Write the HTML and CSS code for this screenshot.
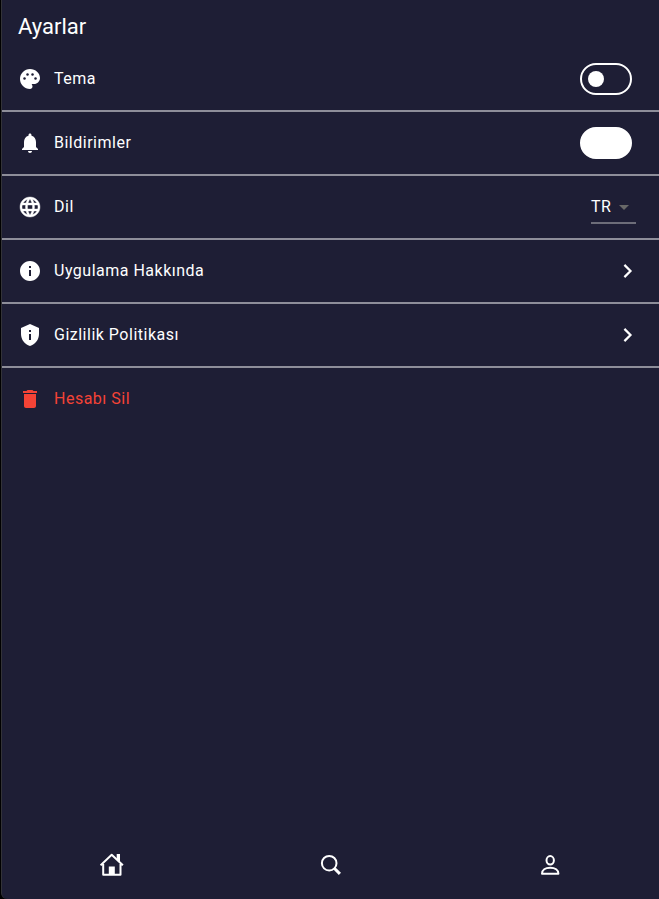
FILE: index.html
```html
<!DOCTYPE html>
<html lang="tr">
<head>
<meta charset="utf-8">
<title>Ayarlar</title>
<link rel="stylesheet" href="styles.css">
</head>
<body>
<div class="app">
  <h1 class="title">Ayarlar</h1>
  <main class="settings">
    <div class="row">
      <svg class="icon" viewBox="0 0 24 24"><path d="M12 2C6.490 2 2 6.490 2 12s4.490 10 10 10c1.380 0 2.500-1.120 2.500-2.500 0-.61-.23-1.200-.64-1.670-.08-.1-.13-.21-.13-.33 0-.28.22-.5.5-.5H16c3.310 0 6-2.690 6-6 0-4.960-4.490-9-10-9z"/><g class="hole"><circle cx="6.500" cy="11.500" r="1.250"/><circle cx="9.500" cy="7.500" r="1.250"/><circle cx="14.500" cy="7.500" r="1.250"/><circle cx="17.500" cy="11.500" r="1.250"/></g></svg>
      <span class="label">Tema</span>
      <span class="switch"><span class="thumb"></span></span>
    </div>
    <div class="row">
      <svg class="icon" viewBox="0 0 24 24"><path d="M12 22c1.100 0 2-.9 2-2h-4c0 1.100.9 2 2 2zm6-6v-5c0-3.070-1.630-5.640-4.500-6.320V4c0-.83-.67-1.500-1.500-1.500s-1.500.67-1.500 1.500v.68C7.640 5.360 6 7.920 6 11v5l-2 2v1h16v-1l-2-2z"/></svg>
      <span class="label">Bildirimler</span>
      <span class="switch on"></span>
    </div>
    <div class="row">
      <svg class="icon globe" viewBox="0 0 24 24"><path d="M11.990 2C6.470 2 2 6.480 2 12s4.470 10 9.990 10C17.520 22 22 17.520 22 12S17.520 2 11.990 2zm6.930 6h-2.950c-.32-1.250-.78-2.450-1.380-3.560 1.840.63 3.370 1.910 4.330 3.560zM12 4.040c.83 1.200 1.480 2.530 1.910 3.960h-3.820c.43-1.430 1.080-2.760 1.910-3.960zM4.260 14C4.100 13.360 4 12.690 4 12s.1-1.360.26-2h3.380c-.08.66-.14 1.320-.14 2s.06 1.340.14 2H4.260zm.82 2h2.950c.32 1.250.78 2.450 1.380 3.560-1.840-.63-3.370-1.900-4.330-3.560zm2.950-8H5.080c.96-1.660 2.490-2.930 4.330-3.560C8.810 5.550 8.350 6.750 8.030 8zM12 19.960c-.83-1.200-1.480-2.530-1.910-3.960h3.820c-.43 1.430-1.080 2.760-1.910 3.960zM14.340 14H9.660c-.09-.66-.16-1.320-.16-2s.07-1.350.16-2h4.680c.09.65.16 1.320.16 2s-.07 1.340-.16 2zm.25 5.560c.6-1.110 1.060-2.310 1.380-3.560h2.950c-.96 1.650-2.490 2.930-4.330 3.560zM16.360 14c.08-.66.14-1.320.14-2s-.06-1.340-.14-2h3.380c.16.64.26 1.310.26 2s-.1 1.360-.26 2h-3.380z"/></svg>
      <span class="label">Dil</span>
      <span class="select">TR<svg class="caret" viewBox="0 0 24 24"><path d="M7 10l5 5 5-5z"/></svg></span>
    </div>
    <div class="row">
      <svg class="icon" viewBox="0 0 24 24"><path d="M12 2C6.480 2 2 6.480 2 12s4.480 10 10 10 10-4.480 10-10S17.520 2 12 2zm1 15h-2v-6h2v6zm0-8h-2V7h2v2z"/></svg>
      <span class="label">Uygulama Hakkında</span>
      <svg class="chevron" viewBox="0 0 16 16"><path d="M4.400 1.900L10.500 8l-6.100 6.100"/></svg>
    </div>
    <div class="row">
      <svg class="icon" viewBox="0 0 24 24"><path d="M12 1L3 5v6c0 5.550 3.840 10.740 9 12 5.160-1.260 9-6.450 9-12V5l-9-4zm-1 6h2v2h-2V7zm0 4h2v6h-2v-6z"/></svg>
      <span class="label">Gizlilik Politikası</span>
      <svg class="chevron" viewBox="0 0 16 16"><path d="M4.400 1.900L10.500 8l-6.100 6.100"/></svg>
    </div>
    <div class="row danger">
      <svg class="icon" viewBox="0 0 24 24"><path d="M6 19c0 1.100.9 2 2 2h8c1.100 0 2-.9 2-2V7H6v12zM19 4h-3.500l-1-1h-5l-1 1H5v2h14V4z"/></svg>
      <span class="label">Hesabı Sil</span>
    </div>
  </main>
  <nav class="tabs">
    <svg class="tab" viewBox="0 0 24 24"><path class="line" d="M.6 12.300L11.700 1.800l11.200 10.500M3.200 11v10.800h17.300V11"/><path d="M16.700 1h3.300v8.200l-3.300-3z"/><path d="M8.800 13.500h6V22h-6z"/></svg>
    <svg class="tab" viewBox="0 0 24 24"><circle class="line" cx="10.200" cy="10.200" r="7.300"/><path class="handle" d="M15.500 15.500l5.400 5.400"/></svg>
    <svg class="tab" viewBox="0 0 24 24"><ellipse class="line" cx="12.200" cy="7.300" rx="3.700" ry="4.200"/><path class="line" d="M4 20.700c0-3.700 3.300-6 8.200-6s8.200 2.300 8.200 6z"/></svg>
  </nav>
</div>
</body>
</html>
```
FILE: styles.css
```css
* {
  box-sizing: border-box;
}

body {
  margin: 0;
  background: #000;
  font-family: Roboto, sans-serif;
  color: #fff;
}

.app {
  display: flex;
  flex-direction: column;
  height: 899px;
  margin-left: 1px;
  border-left: 1px solid #333338;
  border-bottom-left-radius: 6px;
  background: #1e1e35;
}

.title {
  height: 48px;
  margin: 0;
  padding: 13px 16px 0;
  font-size: 22px;
  font-weight: 400;
  line-height: 28px;
}

.settings {
  flex: 1;
}

.row {
  display: flex;
  align-items: center;
  height: 64px;
  padding: 0 27px 0 16px;
  border-bottom: 2px solid #8e8e9a;
}

.danger {
  border-bottom-color: transparent;
  color: #f44336;
}

.icon {
  width: 24px;
  height: 24px;
  margin-right: 12px;
  fill: currentColor;
}

.hole {
  fill: #1e1e35;
}

.globe {
  stroke: #fff;
  stroke-width: 0.4;
}

.label {
  flex: 1;
  font-size: 16px;
  line-height: 24px;
  letter-spacing: 0.5px;
  padding-bottom: 1px;
}

.switch {
  display: flex;
  align-items: center;
  width: 52px;
  height: 32px;
  padding-left: 6px;
  border: 2px solid #fff;
  border-radius: 16px;
}

.on {
  background: #fff;
}

.thumb {
  width: 16px;
  height: 16px;
  border-radius: 50%;
  background: #fff;
}

.select {
  display: flex;
  align-items: center;
  width: 45px;
  height: 34px;
  margin: 0 -4px 1px 0;
  padding-top: 1px;
  border-bottom: 2px solid #6d6d79;
  font-size: 16px;
  letter-spacing: 0.5px;
}

.caret {
  flex: none;
  width: 24px;
  height: 24px;
  margin: 1px 0 0 1px;
  fill: #686868;
}

.chevron {
  width: 16px;
  height: 16px;
  margin-right: -4px;
  fill: none;
  stroke: #fff;
  stroke-width: 2.2;
}

.tabs {
  display: flex;
  align-items: center;
  justify-content: space-around;
  height: 68px;
}

.tab {
  width: 24px;
  height: 24px;
  fill: #fff;
}

.line,
.handle {
  fill: none;
  stroke: #fff;
  stroke-width: 2;
  stroke-linejoin: round;
}

.handle {
  stroke-width: 3;
}
```
